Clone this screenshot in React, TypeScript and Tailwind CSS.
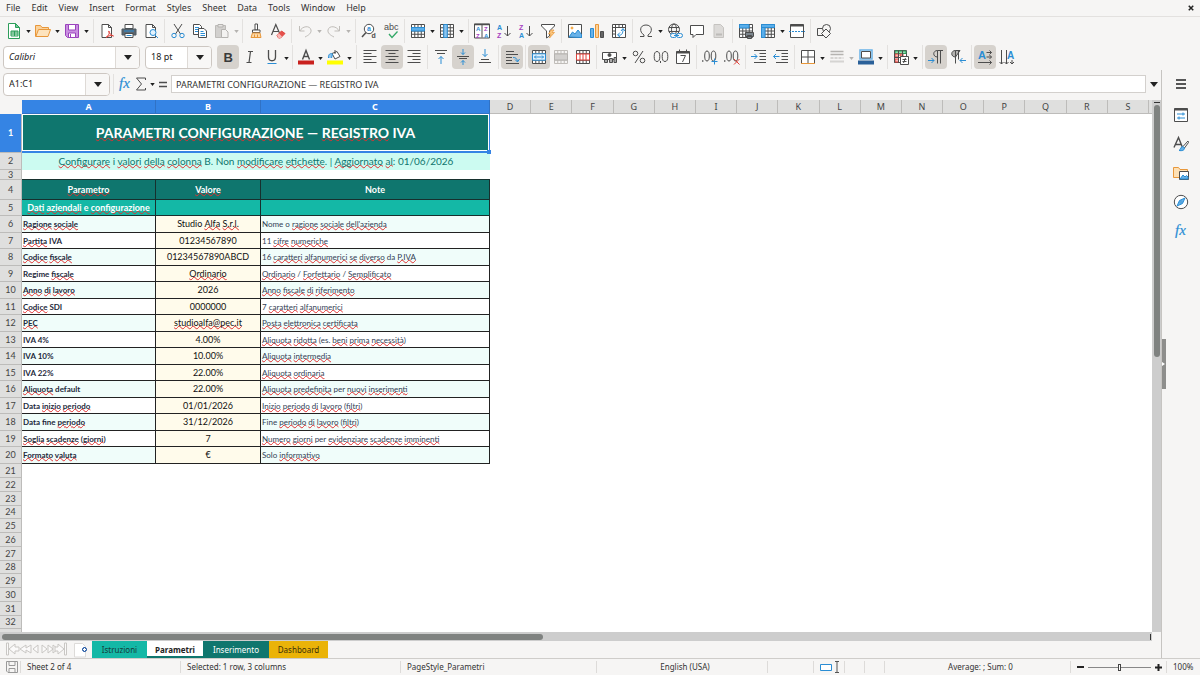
import type { ReactNode } from 'react';
import clsx from 'clsx';

const GRAY = '#4d4d4d';
const BLUE = '#2a8dd4';

const menus = ['File', 'Edit', 'View', 'Insert', 'Format', 'Styles', 'Sheet', 'Data', 'Tools', 'Window', 'Help'];
const freeColumns = 'DEFGHIJKLMNOPQRS'.split('');
const emptyRows = [21, 22, 23, 24, 25, 26, 27, 28, 29, 30, 31, 32, 33];

// Words in braces are the ones flagged by the spell checker
const rows = [
  ['{Ragione} {sociale}', 'Studio {Alfa} {S.r.l.}', "Nome o {ragione} {sociale} {dell'azienda}"],
  ['{Partita} IVA', '01234567890', '11 {cifre} {numeriche}'],
  ['{Codice} {fiscale}', '01234567890ABCD', '16 {caratteri} {alfanumerici} {se} {diverso} da {P.IVA}'],
  ['Regime {fiscale}', '{Ordinario}', '{Ordinario} / {Forfettario} / {Semplificato}'],
  ['{Anno} {di} {lavoro}', '2026', '{Anno} {fiscale} {di} {riferimento}'],
  ['{Codice} SDI', '0000000', '7 {caratteri} {alfanumerici}'],
  ['{PEC}', '{studioalfa@pec.it}', '{Posta} {elettronica} {certificata}'],
  ['IVA 4%', '4.00%', '{Aliquota} {ridotta} (es. {beni} {prima} {necessità})'],
  ['IVA 10%', '10.00%', '{Aliquota} {intermedia}'],
  ['IVA 22%', '22.00%', '{Aliquota} {ordinaria}'],
  ['{Aliquota} default', '22.00%', '{Aliquota} {predefinita} per {nuovi} {inserimenti}'],
  ['Data {inizio} {periodo}', '01/01/2026', '{Inizio} {periodo} {di} {lavoro} ({filtri})'],
  ['Data fine {periodo}', '31/12/2026', 'Fine {periodo} {di} {lavoro} ({filtri})'],
  ['{Soglia} {scadenze} ({giorni})', '7', '{Numero} {giorni} per {evidenziare} {scadenze} {imminenti}'],
  ['{Formato} {valuta}', '€', 'Solo {informativo}'],
];

function Spell({ text }: { text: string }) {
  return (
    <>
      {text.split(/\{(.*?)\}/).map((part, index) =>
        index % 2 === 1 ? (
          <span
            key={index}
            className="underline decoration-[#e03030] decoration-wavy decoration-[1px] underline-offset-[-1px] [text-decoration-skip-ink:none]"
          >
            {part}
          </span>
        ) : (
          part
        )
      )}
    </>
  );
}

function Svg({ children, size = 'size-4' }: { children: ReactNode; size?: string }) {
  return (
    <svg viewBox="0 0 16 16" className={clsx('shrink-0 overflow-visible', size)} fill="none" stroke={GRAY} aria-hidden="true">
      {children}
    </svg>
  );
}

function Glyph({ x, y, size, fill = GRAY, weight, children }: {
  x: number; y: number; size: number; fill?: string; weight?: string; children: string;
}) {
  return (
    <text x={x} y={y} fontSize={size} fill={fill} stroke="none" fontFamily='"Liberation Sans", sans-serif' fontWeight={weight}>
      {children}
    </text>
  );
}

const pageOutline = 'M3 1.5h6.5l3 3v10H3z M9.5 1.5v3h3';
const gridLines = 'M1.5 1.5h13v13h-13z M1.5 4.75h13 M1.5 8h13 M1.5 11.25h13 M4.75 1.5v13 M8 1.5v13 M11.25 1.5v13';

const icons: Record<string, ReactNode> = {
  new: (
    <Svg>
      <path d="M2.5 .5h7l4 4v11h-11z" fill="#fff" stroke="#2e9e5b" />
      <path d="M9.5 .5v4h4z" fill="#6fcf97" stroke="#2e9e5b" />
      <path d="M5 8h7v5H5z" fill="#d9f2e3" stroke="#2e9e5b" />
      <path d="M5 9h7 M5 11h7 M8.5 8v5" stroke="#2e9e5b" />
    </Svg>
  ),
  open: (
    <Svg>
      <path d="M.5 13.5v-11h5l1.5 2h6.5v2" fill="#fbd29b" stroke="#e8973a" />
      <path d="M.8 13.5l2.7-7h12l-2.500 7z" fill="#fde3bd" stroke="#e8973a" />
    </Svg>
  ),
  save: (
    <Svg>
      <path d="M1.500 1.500h13v13h-11l-2-2z" fill="#c98fe0" stroke="#9a42bd" />
      <path d="M4.500 1.500h7v5.500h-7z" fill="#fff" stroke="#9a42bd" />
      <path d="M4.500 10h7v4.500h-7z" fill="#fff" stroke="#9a42bd" />
      <path d="M6.500 11v3" stroke="#9a42bd" />
    </Svg>
  ),
  pdf: (
    <Svg>
      <path d={pageOutline} fill="#fff" />
      <path d="M7 14.500c3-2 4-5 3-6.500c-1 0 0 3 4.500 5c-2-1-5-.5-7.500 1.500z" stroke="#e0433c" />
    </Svg>
  ),
  print: (
    <Svg>
      <path d="M4 1.500h8v4H4z" fill="#fff" />
      <path d="M1 6h14v6H1z" fill="#5b6670" stroke="#4d5961" />
      <path d="M3 8h10" stroke={BLUE} />
      <path d="M4 10.500h8v4H4z" fill="#fff" />
      <path d="M5.500 12.500h5" stroke={BLUE} />
    </Svg>
  ),
  preview: (
    <Svg>
      <path d={pageOutline} fill="#fff" />
      <circle cx="10" cy="9.500" r="3" fill="#e3f2fd" stroke={BLUE} />
      <path d="M12 12l3 3" stroke={BLUE} />
    </Svg>
  ),
  cut: (
    <Svg>
      <path d="M4 1l6.500 10 M12 1L5.500 11" />
      <circle cx="4" cy="12.500" r="2.200" stroke={BLUE} />
      <circle cx="12" cy="12.500" r="2.200" stroke={BLUE} />
    </Svg>
  ),
  copy: (
    <Svg>
      <path d="M1.500 1.500h6l2 2v8h-8z" fill="#fff" />
      <path d="M3 4.500h4 M3 6.500h3 M3 8.500h3" stroke={BLUE} />
      <path d="M6.500 5.500h5.500l2.500 2.500v6.500h-8z" fill="#fff" />
      <path d="M8.500 8.500h3 M8.500 10.500h4.500 M8.500 12.500h4.500" stroke={BLUE} />
    </Svg>
  ),
  paste: (
    <Svg>
      <path d="M1.500 2.500h10v12h-10z" fill="#d2d0ce" stroke="#bdbbb8" />
      <path d="M4 1.500h5v2.500H4z" fill="#e6e4e2" stroke="#b5b3b0" />
      <path d="M7.500 6.500h4l2.500 2.500v5.500H7.500z" fill="#f3f2f1" stroke="#b5b3b0" />
    </Svg>
  ),
  brush: (
    <Svg>
      <path d="M7 1h2.500v6H7z" fill="#fff" />
      <path d="M4.500 7h7.500v2.500H4.500z" fill="#fff" />
      <path d="M4.500 10h7.500l1 4.500H3z" fill="#fdd9a8" stroke="#e8973a" />
      <path d="M6.500 11.500v3 M9.500 11.500v3" stroke="#e8973a" />
    </Svg>
  ),
  clear: (
    <Svg>
      <path d="M1.500 12L5.800 1.500L9.500 10 M3 8.500h6" strokeWidth="1.200" />
      <path d="M7 12.500l4.500-4.500l3.500 2.500l-4.500 4.500h-2z" fill="#e5504c" stroke="#e0433c" />
      <path d="M7 12.500l2-2l3 3l-1.500 1.500h-2z" fill="#f9b8b5" stroke="none" />
    </Svg>
  ),
  undo: <Svg><path d="M2.500 3v5h5 M3 8c2-5 10-6 11-1c.5 3-2 5-6 7" stroke="#c0bdb9" /></Svg>,
  redo: <Svg><path d="M13.500 3v5h-5 M13 8c-2-5-10-6-11-1c-.5 3 2 5 6 7" stroke="#c0bdb9" /></Svg>,
  find: (
    <Svg>
      <circle cx="8" cy="6" r="4.700" fill="#fff" />
      <path d="M5 9.500l-4 4.500" strokeWidth="1.500" />
      <Glyph x={6} y={8} size={7} fill={BLUE} weight="700">a</Glyph>
      <Glyph x={10.500} y={14.500} size={7} weight="700">d</Glyph>
    </Svg>
  ),
  spell: (
    <Svg>
      <Glyph x={1} y={7} size={9}>abc</Glyph>
      <path d="M6 11l3 3.500l5.500-6" stroke="#33a867" strokeWidth="1.300" />
    </Svg>
  ),
  tableRow: (
    <Svg>
      <path d={gridLines} fill="#fff" />
      <path d="M1.500 4.500h13v3.500h-13z" fill="#5aaeea" stroke={BLUE} />
    </Svg>
  ),
  tableColumn: (
    <Svg>
      <path d={gridLines} fill="#fff" />
      <path d="M4.750 1.500h3.500v13h-3.500z" fill="#8cc5ef" stroke={BLUE} />
    </Svg>
  ),
  sort: (
    <Svg>
      <path d="M.5 1v14h15V1z M8 1.500v13" fill="#fff" />
      <path d="M0 1.500h16" strokeWidth="1.500" />
      <Glyph x={2} y={7.500} size={6} fill={BLUE} weight="700">A</Glyph>
      <Glyph x={2} y={14.500} size={6} fill="#a53fc0" weight="700">Z</Glyph>
      <Glyph x={10} y={7.500} size={6} fill="#a53fc0" weight="700">Z</Glyph>
      <Glyph x={10} y={14.500} size={6} fill={BLUE} weight="700">A</Glyph>
    </Svg>
  ),
  az: (
    <Svg>
      <Glyph x={1} y={6.500} size={7} fill={BLUE} weight="700">A</Glyph>
      <Glyph x={1} y={14.500} size={7} fill="#a53fc0" weight="700">Z</Glyph>
      <path d="M11.500 3v10 M8.500 10l3 3l3-3" />
    </Svg>
  ),
  za: (
    <Svg>
      <Glyph x={1} y={6.500} size={7} fill="#a53fc0" weight="700">Z</Glyph>
      <Glyph x={1} y={14.500} size={7} fill={BLUE} weight="700">A</Glyph>
      <path d="M11.500 3v10 M8.500 10l3 3l3-3" />
    </Svg>
  ),
  filter: (
    <Svg>
      <path d="M1.500 1.500h13v1.500l-5 5v5l-3 2v-7l-5-5z" fill="#fff" />
      <path d="M11 7l-2.500 4h2.500l-1.500 4l5-5.500h-2.500l2-2.500z" fill="#fbc77f" stroke="#e8973a" strokeWidth=".7" />
    </Svg>
  ),
  image: (
    <Svg>
      <path d="M1.500 1.500h13v13h-13z" fill="#fff" />
      <path d="M2 14l3.500-5l2.500 2l3-4l3.500 4.500v3z" fill="#69b2e8" stroke={BLUE} />
      <circle cx="5" cy="5" r="1" fill="#f5a742" stroke="#f5a742" />
    </Svg>
  ),
  chart: (
    <Svg>
      <path d="M1.500 5.500h3v9h-3z" fill="#69b2e8" stroke={BLUE} />
      <path d="M6.500 1.500h3v13h-3z" fill="#fcd29a" stroke="#e8973a" />
      <path d="M11.500 8.500h3v6h-3z" fill="#666" />
    </Svg>
  ),
  pivot: (
    <Svg>
      <path d="M1.500 1.500h13v13h-13z M1.500 4.500h13 M4.500 1.500v13 M8 1.500v3 M11.500 1.500v3 M1.500 8h3 M1.500 11h3" fill="#fff" />
      <path d="M7 12c4 1 5-2 5-6 M10 8l2-2.500l2 2.500 M9 9.500L6.500 12l2.500 2" stroke={BLUE} />
    </Svg>
  ),
  omega: <Svg><path d="M2 13.500h4v-1.500c-5-3-4.500-10 2-10s7 7 2 10v1.500h4" /></Svg>,
  link: (
    <Svg>
      <circle cx="7" cy="6.500" r="5.500" />
      <ellipse cx="7" cy="6.500" rx="2.500" ry="5.500" />
      <path d="M2 4.500h10 M2 8.500h10" />
      <rect x="3.500" y="10.500" width="6" height="4" rx="2" fill="#f6f5f4" stroke={BLUE} />
      <rect x="9.500" y="10.500" width="6" height="4" rx="2" fill="#f6f5f4" stroke={BLUE} />
      <path d="M7 12.500h5" stroke={BLUE} />
    </Svg>
  ),
  comment: <Svg><path d="M1.500 2.500h13v9h-7.500l-3 3v-3h-2.500z" fill="#fff" /></Svg>,
  header: (
    <Svg>
      <path d="M3 1.500h6.500l3 3v10H3z" fill="#dcdad8" stroke="#c5c3c0" />
      <path d="M5 11.500h6" stroke="#bdbbb8" strokeWidth="2" />
    </Svg>
  ),
  printArea: (
    <Svg>
      <path d={gridLines} fill="#fff" />
      <path d="M1.500 1.500h9.500v3.500H1.500z" fill="#5aaeea" stroke={BLUE} />
      <path d="M7.500 9.500h8v4h-8z M9.500 12.500h4v3h-4z" fill="#7c868e" />
    </Svg>
  ),
  freeze: (
    <Svg>
      <path d={gridLines} fill="#fff" />
      <path d="M1.500 1.500h13v3h-13z M1.500 4.500h3.500v10h-3.500z" fill="#5aaeea" stroke={BLUE} />
    </Svg>
  ),
  split: (
    <Svg>
      <path d="M1.500 1.500h13v13h-13z" fill="#fff" />
      <path d="M1.500 2.500h13" strokeWidth="2" />
      <path d="M0 8.500h16" stroke={BLUE} strokeDasharray="2 1" />
    </Svg>
  ),
  shapes: (
    <Svg>
      <path d="M1.500 5.500h7v7h-7z" />
      <circle cx="10.500" cy="5.500" r="4" fill="#f6f5f4" />
      <path d="M10 6l4.500 4.500l-4.500 4.500l-4.500-4.500z" fill="#f6f5f4" />
    </Svg>
  ),
  bold: <Svg><Glyph x={3.500} y={12.500} size={13} weight="700" fill="#3a3a3a">B</Glyph></Svg>,
  italic: <Svg><path d="M6 2.500h5 M4.500 13.500h5 M8.500 2.500l-1.500 11" strokeWidth="1.200" /></Svg>,
  underline: (
    <Svg>
      <path d="M4.500 1v7c0 5 7 5 7 0v-7" strokeWidth="1.300" />
      <path d="M3.500 14.500h9" stroke={BLUE} />
    </Svg>
  ),
  fontColor: (
    <Svg>
      <path d="M4.500 10.500L8 1.500L11.500 10.500 M5.500 7.500h5" strokeWidth="1.400" />
      <path d="M0 13.500h16" stroke="#c9211e" strokeWidth="4" />
    </Svg>
  ),
  fill: (
    <Svg>
      <path d="M5 4.500l5-2l3 5l-5 2.500z M8 1v4" fill="#fff" />
      <path d="M1.500 9c-.5-4 2-5 4-4l-1 4" fill="#8cc5ef" stroke={BLUE} />
      <path d="M0 13.500h16" stroke="#ffff00" strokeWidth="4" />
    </Svg>
  ),
  left: <Svg><path d="M1.500 1.500h13 M1.500 4.500h8 M1.500 7.500h13 M1.500 10.500h8 M1.500 13.500h13" /></Svg>,
  center: <Svg><path d="M1.500 1.500h13 M4.500 4.500h7 M1.500 7.500h13 M4.500 10.500h7 M1.500 13.500h13" /></Svg>,
  right: <Svg><path d="M1.500 1.500h13 M6.500 4.500h8 M1.500 7.500h13 M6.500 10.500h8 M1.500 13.500h13" /></Svg>,
  top: (
    <Svg>
      <path d="M2 1.500h12 M4 4.500h8" />
      <path d="M8 15V7.500 M5.500 10L8 7.500l2.500 2.500" stroke={BLUE} />
    </Svg>
  ),
  middle: (
    <Svg>
      <path d="M2 7.500h12 M4 9.500h8" />
      <path d="M8 0v5.500 M6 3.500l2 2l2-2 M8 16v-4.500 M6 13.500l2-2l2 2" stroke={BLUE} />
    </Svg>
  ),
  bottom: (
    <Svg>
      <path d="M4 10.500h8 M2 13.500h12" />
      <path d="M8 0v7.500 M5.500 5L8 7.500l2.500-2.500" stroke={BLUE} />
    </Svg>
  ),
  wrap: (
    <Svg>
      <path d="M2 2.500h8 M2 5.500h12 M2 8.500h6 M2 11.500h6 M2 14.500h13" />
      <path d="M9 8.500c3 0 4 1 4.500 4 M11 10.500l2.500 2.500l2-3" stroke={BLUE} />
    </Svg>
  ),
  merge: (
    <Svg>
      <path d={gridLines} fill="#fff" />
      <path d="M1.500 4.800h13v6.400h-13z" fill="#e3f2fd" stroke={BLUE} />
      <path d="M3.500 8h9 M5 6.500L3.500 8L5 9.500 M11 6.500L12.500 8L11 9.500" stroke={BLUE} />
    </Svg>
  ),
  mergeOff: (
    <Svg>
      <path d={gridLines} stroke="#c0bdb9" />
      <path d="M1.500 5h13v6h-13z" fill="#d2d0ce" stroke="#b5b3b0" />
    </Svg>
  ),
  unmerge: (
    <Svg>
      <path d={gridLines} fill="#fff" />
      <path d="M1.500 5h13v6h-13z M5 5v6 M8 5v6 M11 5v6" stroke="#e0433c" fill="#fff" />
    </Svg>
  ),
  currency: (
    <Svg>
      <path d="M.5 3.500h14v7H.5z" fill="#fff" />
      <circle cx="7.500" cy="6" r="1.500" fill={GRAY} />
      <path d="M2.500 10.500h3v3h-3z M7.500 9.500h3v4h-3z M12 8.500h2.500v5H12z" fill="#aaa" />
    </Svg>
  ),
  percent: (
    <Svg>
      <circle cx="4.500" cy="4.500" r="2.300" />
      <circle cx="11.500" cy="11.500" r="2.300" />
      <path d="M12 2L4 14" />
    </Svg>
  ),
  number: (
    <Svg>
      <ellipse cx="4" cy="7.500" rx="2.800" ry="5" />
      <ellipse cx="12" cy="7.500" rx="2.800" ry="5" />
      <path d="M7.500 12v2" />
    </Svg>
  ),
  date: (
    <Svg>
      <path d="M1.500 2.500h13v12h-13z" fill="#fff" />
      <path d="M1.500 3.500h13" strokeWidth="2" />
      <path d="M4.500 .5v3 M11.500 .5v3 M5.500 6.500h5l-3 6.500" />
    </Svg>
  ),
  addDecimal: (
    <Svg>
      <path d="M.8 11v2" />
      <ellipse cx="5" cy="7" rx="2.300" ry="5" />
      <ellipse cx="11.500" cy="7" rx="2.300" ry="5" />
      <path d="M9.500 12.500h6 M12.500 9.500v6" stroke={BLUE} />
    </Svg>
  ),
  removeDecimal: (
    <Svg>
      <path d="M.8 11v2" />
      <ellipse cx="5" cy="7" rx="2.300" ry="5" />
      <ellipse cx="11.500" cy="7" rx="2.300" ry="5" />
      <path d="M10 10l5.500 5.500 M15.500 10L10 15.500" stroke="#e0433c" />
    </Svg>
  ),
  indent: (
    <Svg>
      <path d="M3 1.500h12 M8.500 4.500H15 M8.500 7.500H15 M8.500 10.500H15 M3 13.500h12" />
      <path d="M0 7.500h6 M3.500 5L6 7.500L3.500 10" stroke={BLUE} />
    </Svg>
  ),
  outdent: (
    <Svg>
      <path d="M3 1.500h12 M8.500 4.500H15 M8.500 7.500H15 M8.500 10.500H15 M3 13.500h12" />
      <path d="M.5 7.500h6 M3 5L.5 7.500L3 10" stroke={BLUE} />
    </Svg>
  ),
  borders: (
    <Svg>
      <path d="M1.500 1.500h13v13h-13z M8 1.500v13 M1.500 8h13" fill="#fff" />
      <path d="M1 14.500h14" stroke="#e8973a" />
    </Svg>
  ),
  lineStyle: (
    <Svg>
      <path d="M1.500 2.500h13 M1.500 5.500h13" stroke="#b5b3b0" strokeWidth="1.500" />
      <path d="M1.500 9h13" stroke="#b5b3b0" strokeDasharray="3 1" />
      <path d="M1.500 12.500h13" stroke="#b5b3b0" strokeDasharray="1 1" strokeWidth="2" />
    </Svg>
  ),
  borderColor: (
    <Svg>
      <path d="M2 1h12v9H2z" fill="#fff" stroke="#69b2e8" strokeWidth="1.500" />
      <path d="M3.500 2.500h9v6.500h-9z" />
      <path d="M0 13.500h16" stroke="#2a6099" strokeWidth="4" />
    </Svg>
  ),
  conditional: (
    <Svg>
      <path d="M1.500 1.500h12v12h-12z" fill="#fff" />
      <path d="M2 2h11v2.500H2z" fill="#8fdcae" stroke="#2e9e5b" />
      <path d="M2 5h3.500v3H2z M2 10h3.500v3H2z M7 5h3v2H7z" fill="#f9b8b5" stroke="#e0433c" />
      <path d="M1.500 8.500h12 M1.500 1.500v12 M5.500 1.500v12 M9.500 1.500v12" />
      <path d="M7.500 7.500h8v8h-8z" fill="#fff" />
      <path d="M9.500 10.500h4 M9.500 12.500h4 M12.500 9l-2 5" />
    </Svg>
  ),
  ltr: (
    <Svg>
      <path d="M15 1.500H9.500c-5 0-5 6.500 0 6.500 M9.500 1.500v13 M12.500 1.500v13" />
      <path d="M0 11.500h6 M3.500 9L6 11.500L3.500 14" stroke={BLUE} />
    </Svg>
  ),
  rtl: (
    <Svg>
      <path d="M10 1.500H5.500c-5 0-5 6.500 0 6.500z" fill="#b5b3b0" />
      <path d="M5.500 1.500v13 M8.500 1.500v9" />
      <path d="M16 11.500h-6 M12.500 9L10 11.500l2.500 2.500" stroke={BLUE} />
    </Svg>
  ),
  textRight: (
    <Svg>
      <Glyph x={1} y={10} size={11} fill={BLUE} weight="700">A</Glyph>
      <path d="M9.500 3.500h5 M12.500 1.500l2 2l-2 2 M9.500 8h5 M12.500 6l2 2l-2 2 M1 13.500h13.500 M12.500 11.500l2 2l-2 2" />
    </Svg>
  ),
  textDown: (
    <Svg>
      <Glyph x={8} y={10} size={10} fill={BLUE} weight="700">A</Glyph>
      <path d="M2.500 1v14 M.5 13l2 2l2-2 M7.500 1v14 M5.500 13l2 2l2-2 M13 11v4 M11 13l2 2l2-2" />
    </Svg>
  ),
  fx: (
    <Svg>
      <text x="2" y="12" fontSize="15" fontStyle="italic" fontFamily='"Liberation Serif", serif' fill={BLUE} stroke={BLUE} strokeWidth=".2">fx</text>
    </Svg>
  ),
  sum: <Svg><path d="M12.500 4V2H3.500L8.500 8L3.500 14h9v-2" /></Svg>,
  equals: <Svg><path d="M4 6.500h8 M4 10.500h8" strokeWidth="1.500" /></Svg>,
  hamburger: <Svg><path d="M3 4h10 M3 8h10 M3 12h10" stroke="#222" strokeWidth="1.500" /></Svg>,
  properties: (
    <Svg>
      <path d="M1.500 1.500h13v13h-13z" fill="#fff" />
      <path d="M1.500 2.500h13" strokeWidth="2" />
      <path d="M4 7h8 M10 5.500v3 M4 11h8 M6 9.500v3" stroke={BLUE} />
    </Svg>
  ),
  styles: (
    <Svg>
      <path d="M1 11.500L5.500 1.500L9.500 11.500 M2.500 8.500h6" strokeWidth="1.400" />
      <path d="M15 5l-5 5.500l1.500 1.500L15.500 6.500z" fill="#fff" />
      <path d="M10 10.500c-2.500 0-2 3-4 4c3 .5 5.500 0 5.500-2.500z" fill="#69b2e8" stroke={BLUE} />
    </Svg>
  ),
  gallery: (
    <Svg>
      <path d="M.5 12.500v-10h5l1.500 2h7.500v8z" fill="#fde0b5" stroke="#e8973a" />
      <path d="M6.500 6.500h9v8h-9z" fill="#fff" />
      <path d="M7 14l3-4l2 2l1.500-1.500L15 12v2z" fill="#69b2e8" stroke={BLUE} />
    </Svg>
  ),
  navigator: (
    <Svg>
      <circle cx="8" cy="8" r="6.700" fill="#fff" />
      <path d="M12 4L9.500 9.500L4 12l2.500-5.500z" fill="#69b2e8" stroke={BLUE} />
      <circle cx="8" cy="8" r="1" fill="#fff" stroke={BLUE} />
    </Svg>
  ),
};

const standardBar = [
  'new v', 'open v', 'save v', '||', 'pdf', 'print', 'preview', '|', 'cut', 'copy', 'paste v-', '|', 'brush', 'clear', '|',
  'undo v-', 'redo v-', '||', 'find', 'spell', '|', 'tableRow v', 'tableColumn v', '||', 'sort', 'az', 'za', 'filter', '|',
  'image', 'chart', 'pivot', '|', 'omega v', 'link', 'comment', 'header', '|', 'printArea', 'freeze v', 'split', '|', 'shapes',
];

const formatBar = [
  'bold !', 'italic', 'underline v', '|', 'fontColor v', 'fill v', '||', 'left', 'center !', 'right', '|',
  'top', 'middle !', 'bottom', '|', 'wrap !', '|', 'merge !', 'mergeOff', 'unmerge', '|', 'currency v', 'percent', 'number',
  'date', '|', 'addDecimal', 'removeDecimal', '|', 'indent', 'outdent', '|', 'borders v', 'lineStyle v-', 'borderColor v', '||',
  'conditional v', '||', 'ltr !', 'rtl', '|', 'textRight !', 'textDown',
];

function Caret({ faded = false }: { faded?: boolean }) {
  return (
    <svg viewBox="0 0 6 4" className="h-[3px] w-[5px] shrink-0" fill={faded ? '#b5b3b0' : '#1f1f1f'} aria-hidden="true">
      <path d="M0 0h6L3 4z" />
    </svg>
  );
}

function Tools({ items }: { items: string[] }) {
  return (
    <>
      {items.map((item, index) => {
        if (item.startsWith('|')) {
          return (
            <span key={index} className={clsx('flex shrink-0 justify-center', item === '||' ? 'w-1.5' : 'w-[5px]')}>
              <span className="h-6 w-px bg-[#e3e1df]" />
            </span>
          );
        }
        const [name, flag] = item.split(' ');
        return (
          <span key={index} className="flex shrink-0 items-center">
            <button
              type="button"
              aria-label={name}
              className={clsx('flex h-6 w-[22px] items-center justify-center rounded-sm', flag === '!' && 'bg-[#d6d2cd]')}
            >
              {icons[name]}
            </button>
            {flag?.startsWith('v') && (
              <button type="button" aria-label={`${name} options`} className="flex h-6 w-[7px] items-center justify-center pt-0.5">
                <Caret faded={flag === 'v-'} />
              </button>
            )}
          </span>
        );
      })}
    </>
  );
}

function Combo({ label, value, width, italic }: { label: string; value: string; width: string; italic?: boolean }) {
  return (
    <div className={clsx('flex h-[23px] shrink-0 overflow-hidden rounded-sm border border-[#cdc7c2] bg-white', width)}>
      <input
        aria-label={label}
        defaultValue={value}
        className={clsx('w-0 min-w-0 flex-1 px-[5px] text-[9px] text-[#222] outline-none', italic && 'italic')}
      />
      <button type="button" aria-label={`${label} list`} className="flex w-6 items-center justify-center border-l border-[#dedad6] bg-[#f8f7f6]">
        <svg viewBox="0 0 8 5" className="h-[5px] w-2" fill="#222" aria-hidden="true"><path d="M0 0h8L4 5z" /></svg>
      </button>
    </div>
  );
}

function RowHead({ n, selected = false }: { n: number; selected?: boolean }) {
  return (
    <th
      scope="row"
      className={clsx(
        'border-r border-b border-[#bdbcba] p-0 text-center text-[9px] leading-[12px]',
        selected ? 'bg-[#3584e4] font-bold text-white' : 'bg-[#dfdfde] font-normal text-[#444]'
      )}
    >
      {n}
    </th>
  );
}

function Sheet() {
  return (
    <table className="w-full table-fixed border-separate border-spacing-0 bg-white">
      <colgroup>
        <col className="w-[22px]" />
        <col className="w-[134px]" />
        <col className="w-[105px]" />
        <col className="w-[229px]" />
        {freeColumns.map((c) => <col key={c} />)}
        <col className="w-[3px]" />
      </colgroup>
      <thead>
        <tr className="h-3.5 text-[9px] leading-[12px]">
          <td className="bg-[#f6f5f4] p-0" />
          {['A', 'B', 'C'].map((c) => (
            <th key={c} scope="col" className="border-r border-b border-[#3072c5] bg-[#3584e4] p-0 text-white">{c}</th>
          ))}
          {freeColumns.map((c) => (
            <th key={c} scope="col" className="border-r border-b border-[#bdbcba] bg-[#dfdfde] p-0 font-normal text-[#444]">{c}</th>
          ))}
          <td className="border-b border-[#bdbcba] bg-[#dfdfde] p-0" />
        </tr>
      </thead>
      <tbody className="font-['Lato',sans-serif]">
        <tr className="h-[39px]">
          <RowHead n={1} selected />
          <td colSpan={3} className="relative border-r border-b-2 border-[#3584e4] bg-[#0f766e] p-0 text-center text-[14px] leading-[20px] font-bold text-white">
            <span className="absolute inset-0 border border-white" />
            <span className="absolute -right-[2px] -bottom-[3px] size-1 bg-[#3584e4]" />
            <Spell text="{PARAMETRI} {CONFIGURAZIONE} — {REGISTRO} IVA" />
          </td>
        </tr>
        <tr className="h-[17px]">
          <RowHead n={2} />
          <td colSpan={3} className="bg-[#ccfbf1] p-0 pb-px text-center text-[10px] leading-[14px] text-[#0f766e]">
            <Spell text="{Configurare} i {valori} {della} {colonna} B. Non {modificare} {etichette}. | {Aggiornato} {al}: 01/06/2026" />
          </td>
        </tr>
        <tr className="h-[10px]">
          <th scope="row" className="border-r border-b border-[#bdbcba] bg-[#dfdfde] p-0 text-center text-[9px] leading-[9px] font-normal text-[#444]">3</th>
          <td colSpan={3} className="border-b border-[#17302e] p-0" />
        </tr>
        <tr className="h-5 text-[9px] leading-[14px] text-white">
          <RowHead n={4} />
          {['{Parametro}', '{Valore}', 'Note'].map((t) => (
            <th key={t} scope="col" className="border-r border-b border-[#17302e] bg-[#0f766e] p-0 font-bold"><Spell text={t} /></th>
          ))}
        </tr>
        <tr className="h-4 text-[9px] leading-[14px] text-white">
          <RowHead n={5} />
          <td className="border-r border-b border-[#17302e] bg-[#14b8a6] p-0 text-center font-bold"><Spell text="{Dati} {aziendali} e {configurazione}" /></td>
          <td className="border-r border-b border-[#17302e] bg-[#14b8a6] p-0" />
          <td className="border-r border-b border-[#17302e] bg-[#14b8a6] p-0" />
        </tr>
        {rows.map(([name, value, note], index) => {
          const shade = index % 2 === 0 ? 'bg-[#f0fdfa]' : 'bg-white';
          return (
            <tr key={name} className={clsx('text-[8px] leading-[14px]', index % 2 === 0 ? 'h-[17px]' : 'h-4')}>
              <RowHead n={index + 6} />
              <td className={clsx('border-r border-b border-[#222] p-0 pl-px font-bold whitespace-nowrap text-[#1e293b]', shade)}><Spell text={name} /></td>
              <td className="border-r border-b border-[#222] bg-[#fffbeb] p-0 text-center text-[9px] text-[#111]"><Spell text={value} /></td>
              <td className={clsx('border-r border-b border-[#222] p-0 pl-px whitespace-nowrap text-[#334155]', shade)}><Spell text={note} /></td>
            </tr>
          );
        })}
        {emptyRows.map((n, index) => (
          <tr key={n} className={index % 4 === 3 ? 'h-[13px]' : 'h-3.5'}>
            <RowHead n={n} />
          </tr>
        ))}
      </tbody>
    </table>
  );
}

const sheetTabs = [
  { name: 'Istruzioni', style: 'w-[55px] bg-[#14b8a6] text-[#143c38]' },
  { name: 'Parametri', style: 'w-14 bg-white font-bold text-[#222] shadow-[inset_0_-2px_#0f766e]' },
  { name: 'Inserimento', style: 'w-[66px] bg-[#0f766e] text-white' },
  { name: 'Dashboard', style: 'w-[59px] bg-[#eab308] text-[#3b2f08]' },
];

export default function App() {
  return (
    <div className="flex h-screen flex-col overflow-hidden bg-[#f6f5f4] font-['Noto_Sans',sans-serif] text-[9px] leading-[12px] text-[#333]">
      <nav className="flex h-[17px] shrink-0 items-center gap-[11px] border-b border-[#e3e1df] px-1.5">
        {menus.map((m) => <button key={m} type="button">{m}</button>)}
        <button type="button" aria-label="Close document" className="ml-auto">
          <svg viewBox="0 0 8 8" className="size-1.5" stroke="#222" strokeWidth="2" aria-hidden="true"><path d="M1 1l6 6M7 1L1 7" /></svg>
        </button>
      </nav>

      <div className="flex h-[27px] shrink-0 items-center pl-[3px]">
        <Tools items={standardBar} />
      </div>
      <div className="flex h-[26px] shrink-0 items-center pl-[3px]">
        <Combo label="Font name" value="Calibri" width="w-[137px]" italic />
        <span className="w-[5px]" />
        <Combo label="Font size" value="18 pt" width="w-[67px]" />
        <span className="w-[5px]" />
        <Tools items={formatBar} />
      </div>

      <div className="flex min-h-0 flex-1 border-b border-[#cfcdca]">
        <div className="flex min-w-0 flex-1 flex-col">
          <div className="flex h-[30px] shrink-0 items-center pb-0.5 pl-[3px]">
            <Combo label="Name box" value="A1:C1" width="w-[107px]" />
            <span className="mx-[3px] h-5 w-px bg-[#e3e1df]" />
            <button type="button" aria-label="Function wizard">{icons.fx}</button>
            <button type="button" aria-label="Select function" className="flex items-center gap-px">{icons.sum}<Caret /></button>
            <button type="button" aria-label="Formula">{icons.equals}</button>
            <input
              aria-label="Input line"
              defaultValue="PARAMETRI CONFIGURAZIONE — REGISTRO IVA"
              className="h-[18px] min-w-0 flex-1 border border-[#d3d0cd] bg-white px-1 text-[9px] text-[#333] outline-none"
            />
            <button type="button" aria-label="Expand formula bar" className="flex w-[15px] justify-center">
              <svg viewBox="0 0 8 5" className="h-[5px] w-2" fill="#222" aria-hidden="true"><path d="M0 0h8L4 5z" /></svg>
            </button>
          </div>

          <div className="flex min-h-0 flex-1">
            <div className="min-w-0 flex-1 overflow-hidden bg-white"><Sheet /></div>
            <div className="flex w-[9px] flex-col items-center bg-[#cdcdcd]">
              <span className="mt-0.5 h-px w-1.5 bg-[#333]" />
              <span className="mt-0.5 h-[252px] w-1.5 rounded-full bg-[#7f8280]" />
            </div>
          </div>

          <div className="mr-[9px] flex h-[9px] shrink-0 items-center justify-between bg-[#cdcdcd] pl-0.5">
            <span className="h-1.5 w-[47%] rounded-full bg-[#7f8280]" />
            <span className="mr-px h-1.5 w-px bg-[#333]" />
          </div>

          <div className="flex h-[17px] shrink-0 pl-1.5 text-[8px]">
            <svg viewBox="0 0 62 16" className="h-4 w-[62px]" fill="#fbfafa" stroke="#c9c7c4" aria-hidden="true">
              <path d="M.5 2v12h2V2z M3 8l6-5v3h4v4H9v3z M20 4l-6 4l6 4V9l5 3V4l-5 3z M32 4l-5 4l5 4z M36 4v8l5-4z M42 4v8l5-4v4l5-4l-5-4v4z" />
              <path d="M49 6h3V3l6 5l-6 5v-3h-3z M58.500 2v12h2V2z" />
            </svg>
            <button type="button" aria-label="Add sheet" className="ml-1.5 w-[18px]">
              <svg viewBox="0 0 18 16" className="h-4 w-[18px]" aria-hidden="true">
                <path d="M.5 1.500h8l3 3v10.500H.5z" fill="#fff" stroke="#dddbd9" />
                <path d="M8 7.500h5M10.500 5v5" stroke="#2c5fa8" strokeWidth="2.500" />
                <path d="M9 7.500h3M10.500 6v3" stroke="#fff" />
              </svg>
            </button>
            {sheetTabs.map((tab) => (
              <button key={tab.name} type="button" className={clsx('flex items-center justify-center', tab.style)}>{tab.name}</button>
            ))}
          </div>
        </div>

        <aside className="relative flex w-[39px] shrink-0 flex-col items-center gap-[13px] border-l border-[#c6c4c1] pt-1.5">
          <button type="button" aria-label="Hide sidebar" className="absolute top-1/2 left-0 flex h-[50px] w-1 -translate-y-1/2 items-center bg-[#8e8e8c]">
            <svg viewBox="0 0 3 4" className="h-1 w-[3px]" fill="#fff" aria-hidden="true"><path d="M0 0l3 2l-3 2z" /></svg>
          </button>
          {['hamburger', 'properties', 'styles', 'gallery', 'navigator', 'fx'].map((name) => (
            <button key={name} type="button" aria-label={name} className={name === 'hamburger' ? 'mb-0.5' : undefined}>{icons[name]}</button>
          ))}
        </aside>
      </div>

      <footer className="flex h-4 shrink-0 items-center divide-x divide-[#dddbd9] text-[8px] [&>*]:flex [&>*]:h-3 [&>*]:items-center [&>*]:pl-1.5">
        <div className="w-[21px]">
          <svg viewBox="0 0 12 12" className="size-3" fill="none" stroke="#999" aria-hidden="true">
            <path d="M.5 .5h11v11H2l-1.500-1.500z M3 .5v4h6v-4 M3 11.500v-4h6v4" />
          </svg>
        </div>
        <div className="w-[160px]">Sheet 2 of 4</div>
        <div className="w-[220px]">Selected: 1 row, 3 columns</div>
        <div className="w-[196px]">PageStyle_Parametri</div>
        <div className="flex-1 justify-center">English (USA)</div>
        <div className="w-[46px]" />
        <div className="w-[31px]">
          <svg viewBox="0 0 19 12" className="h-3 w-[19px]" fill="none" aria-hidden="true">
            <path d="M.5 3.500h11v6H.5z" stroke={BLUE} fill="#fff" />
            <path d="M15 .5h4M15 11.500h4M17 .5v11" stroke="#555" />
          </svg>
        </div>
        <div className="w-5" />
        <div className="w-5" />
        <div className="w-[186px] justify-center">Average: ; Sum: 0</div>
        <div className="w-24 gap-1">
          <button type="button" aria-label="Zoom out" className="h-0.5 w-[7px] shrink-0 bg-[#222]" />
          <input
            type="range"
            aria-label="Zoom"
            defaultValue={50}
            className="h-2 w-0 min-w-0 flex-1 appearance-none bg-[linear-gradient(#888,#888)] bg-[length:100%_1px] bg-center bg-no-repeat [&::-webkit-slider-thumb]:h-[7px] [&::-webkit-slider-thumb]:w-[3px] [&::-webkit-slider-thumb]:appearance-none [&::-webkit-slider-thumb]:border [&::-webkit-slider-thumb]:border-[#444] [&::-webkit-slider-thumb]:bg-white"
          />
          <button type="button" aria-label="Zoom in" className="mr-1 shrink-0">
            <svg viewBox="0 0 7 7" className="size-[7px]" stroke="#222" strokeWidth="2" aria-hidden="true"><path d="M0 3.500h7M3.500 0v7" /></svg>
          </button>
        </div>
        <div className="w-[33px]">100%</div>
      </footer>
    </div>
  );
}
